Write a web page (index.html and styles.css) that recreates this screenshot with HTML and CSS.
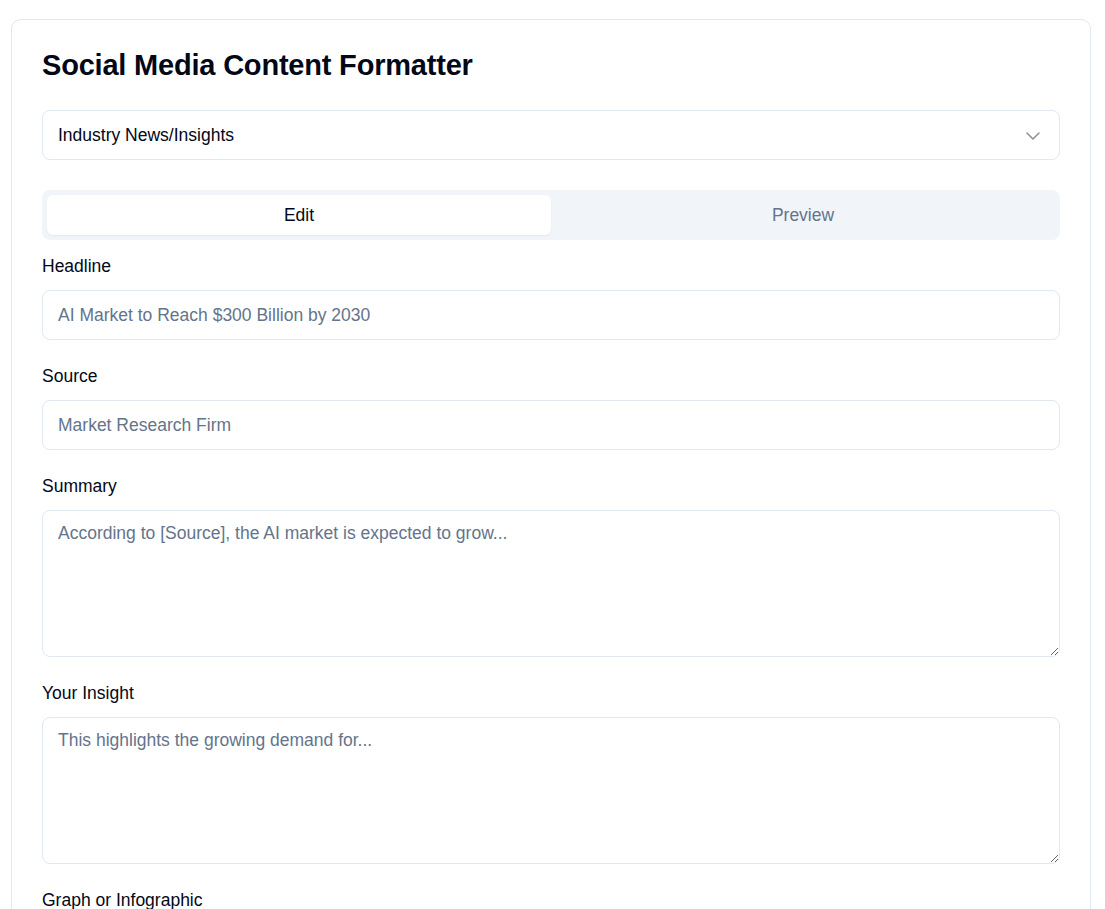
FILE: index.html
```html
<!DOCTYPE html>
<html lang="en">
<head>
<meta charset="utf-8">
<title>Social Media Content Formatter</title>
<link rel="stylesheet" href="styles.css">
</head>
<body>
<div class="page">
  <div class="card">
    <h1 class="title">Social Media Content Formatter</h1>

    <div class="select">
      <span class="select-value">Industry News/Insights</span>
      <svg class="chevron" width="14" height="8" viewBox="0 0 14 8" aria-hidden="true">
        <polyline points="1,1 7,7 13,1" fill="none" stroke="currentColor" stroke-width="1.5" stroke-linecap="round" stroke-linejoin="round"/>
      </svg>
    </div>

    <div class="tabs">
      <button class="tab tab-active" type="button">Edit</button>
      <button class="tab" type="button">Preview</button>
    </div>

    <div class="fields">
      <div class="field field-first">
        <label class="label" for="headline">Headline</label>
        <input class="input" id="headline" type="text" placeholder="AI Market to Reach $300 Billion by 2030">
      </div>
      <div class="field">
        <label class="label" for="source">Source</label>
        <input class="input" id="source" type="text" placeholder="Market Research Firm">
      </div>
      <div class="field">
        <label class="label" for="summary">Summary</label>
        <textarea class="textarea" id="summary" placeholder="According to [Source], the AI market is expected to grow..."></textarea>
      </div>
      <div class="field">
        <label class="label" for="insight">Your Insight</label>
        <textarea class="textarea" id="insight" placeholder="This highlights the growing demand for..."></textarea>
      </div>
      <div class="field">
        <label class="label" for="graph">Graph or Infographic</label>
        <input class="input" id="graph" type="text" placeholder="Describe or link your graph">
      </div>
    </div>
  </div>
</div>
</body>
</html>
```

FILE: styles.css
```css
* {
  box-sizing: border-box;
}

html, body {
  margin: 0;
  padding: 0;
  background: #ffffff;
}

body {
  font-family: "Liberation Sans", Arial, sans-serif;
  color: #020817;
}

.page {
  padding: 19px 14px 40px 11px;
}

.card {
  border: 1px solid #e2e8f0;
  border-radius: 10px;
  background: #ffffff;
  padding: 30px;
}

.title {
  margin: 0;
  font-size: 29px;
  line-height: 30px;
  font-weight: 700;
  color: #020817;
  letter-spacing: -0.2px;
}

.select {
  margin-top: 30px;
  height: 50px;
  border: 1px solid #e2e8f0;
  border-radius: 8px;
  display: flex;
  align-items: center;
  justify-content: space-between;
  padding: 0 19px 0 15px;
  font-size: 17.5px;
  color: #020817;
}

.chevron {
  color: #8a8f98;
  display: block;
  margin-top: 1px;
}

.tabs {
  margin-top: 30px;
  height: 50px;
  background: #f1f5f9;
  border-radius: 8px;
  padding: 5px;
  display: grid;
  grid-template-columns: 1fr 1fr;
}

.tab {
  border: 0;
  background: transparent;
  font-family: inherit;
  font-size: 17.5px;
  color: #64748b;
  border-radius: 6px;
  padding: 0;
  cursor: pointer;
}

.tab-active {
  background: #ffffff;
  color: #020817;
  box-shadow: 0 1px 2px rgba(0, 0, 0, 0.06);
}

.fields {
  display: flex;
  flex-direction: column;
}

.field {
  display: flex;
  flex-direction: column;
  margin-top: 26px;
}

.field-first {
  margin-top: 16px;
}

.label {
  font-size: 17.5px;
  line-height: 20px;
  color: #020817;
  margin-bottom: 14px;
}

.input,
.textarea {
  width: 100%;
  border: 1px solid #e2e8f0;
  border-radius: 8px;
  font-family: inherit;
  font-size: 17.5px;
  color: #020817;
  background: #ffffff;
  outline: none;
}

.input {
  height: 50px;
  padding: 0 15px;
}

.textarea {
  height: 147px;
  padding: 10px 15px;
  line-height: 24px;
  resize: vertical;
  display: block;
}

.input::placeholder,
.textarea::placeholder {
  color: #64748b;
  opacity: 1;
}
```
